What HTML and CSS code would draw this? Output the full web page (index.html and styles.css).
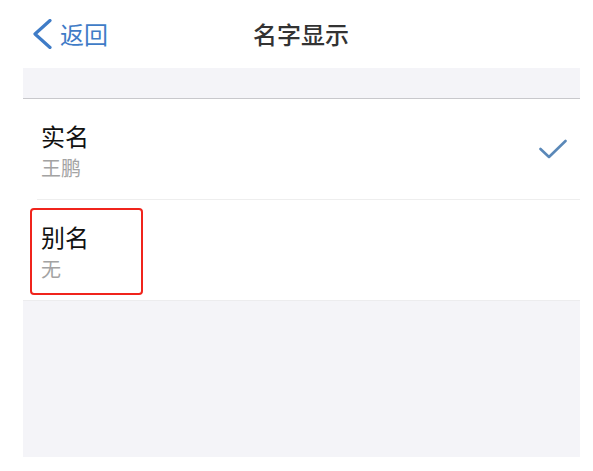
FILE: index.html
```html
<!DOCTYPE html>
<html lang="zh-CN">
<head>
<meta charset="utf-8">
<title>名字显示</title>
<link rel="stylesheet" href="styles.css">
</head>
<body>
<header class="nav">
  <a class="back" href="#">
    <svg class="chev" width="20" height="30" viewBox="0 0 20 30"><polyline points="18,1.5 3,15 18,28.5" fill="none" stroke="#3f7cc7" stroke-width="3.2" stroke-linecap="round" stroke-linejoin="round"/></svg>
    <span class="back-text">返回</span>
  </a>
  <h1 class="title">名字显示</h1>
  <span class="spacer"></span>
</header>
<main class="panel">
  <div class="gap-top"></div>
  <ul class="list">
    <li class="row">
      <div class="texts">
        <div class="row-title">实名</div>
        <div class="row-sub">王鹏</div>
      </div>
      <svg class="check" width="28" height="20" viewBox="0 0 28 20"><polyline points="1.5,10 10,18 26.5,2" fill="none" stroke="#5a88b8" stroke-width="2.6" stroke-linecap="round" stroke-linejoin="round"/></svg>
    </li>
    <li class="row">
      <div class="texts">
        <div class="row-title">别名</div>
        <div class="row-sub">无</div>
      </div>
      <span class="highlight"></span>
    </li>
  </ul>
</main>
</body>
</html>
```

FILE: styles.css
```css
* { box-sizing: border-box; }
html, body {
  margin: 0;
  padding: 0;
  background: #ffffff;
  font-family: "Noto Sans CJK SC", "Noto Sans", sans-serif;
}
.nav {
  height: 68px;
  display: grid;
  grid-template-columns: 1fr auto 1fr;
  align-items: center;
}
.back {
  display: flex;
  align-items: center;
  padding-left: 32px;
  text-decoration: none;
  color: #3f7cc7;
}
.chev { display: block; }
.back-text {
  margin-left: 8px;
  font-size: 24px;
  line-height: 28px;
}
.title {
  margin: 0 0 0 9px;
  font-size: 24px;
  line-height: 28px;
  font-weight: 500;
  color: #333333;
}
.panel {
  margin: 0 13px 0 23px;
  height: 389px;
  background: #f4f4f8;
}
.gap-top {
  height: 31px;
  border-bottom: 1px solid #c8c8cc;
}
.list {
  list-style: none;
  margin: 0;
  padding: 0;
  background: #ffffff;
  border-bottom: 1px solid #ececee;
}
.row {
  position: relative;
  height: 100px;
  display: flex;
  align-items: flex-start;
  padding: 23px 13px 0 18px;
}
.row + .row::before {
  content: "";
  position: absolute;
  left: 14px;
  right: 0;
  top: -1px;
  height: 1px;
  background: #eeeeee;
}
.row + .row { margin-top: 1px; }
.texts { flex: 1; }
.row-title {
  font-size: 24px;
  line-height: 28px;
  color: #111111;
}
.row-sub {
  margin-top: 6px;
  font-size: 20px;
  line-height: 24px;
  color: #a3a3a3;
}
.check {
  align-self: center;
  margin-top: -23px;
  display: block;
}
.highlight {
  position: absolute;
  left: 7px;
  top: 8px;
  width: 113px;
  height: 87px;
  border: 2px solid #f0241c;
  border-radius: 4px;
}
```
